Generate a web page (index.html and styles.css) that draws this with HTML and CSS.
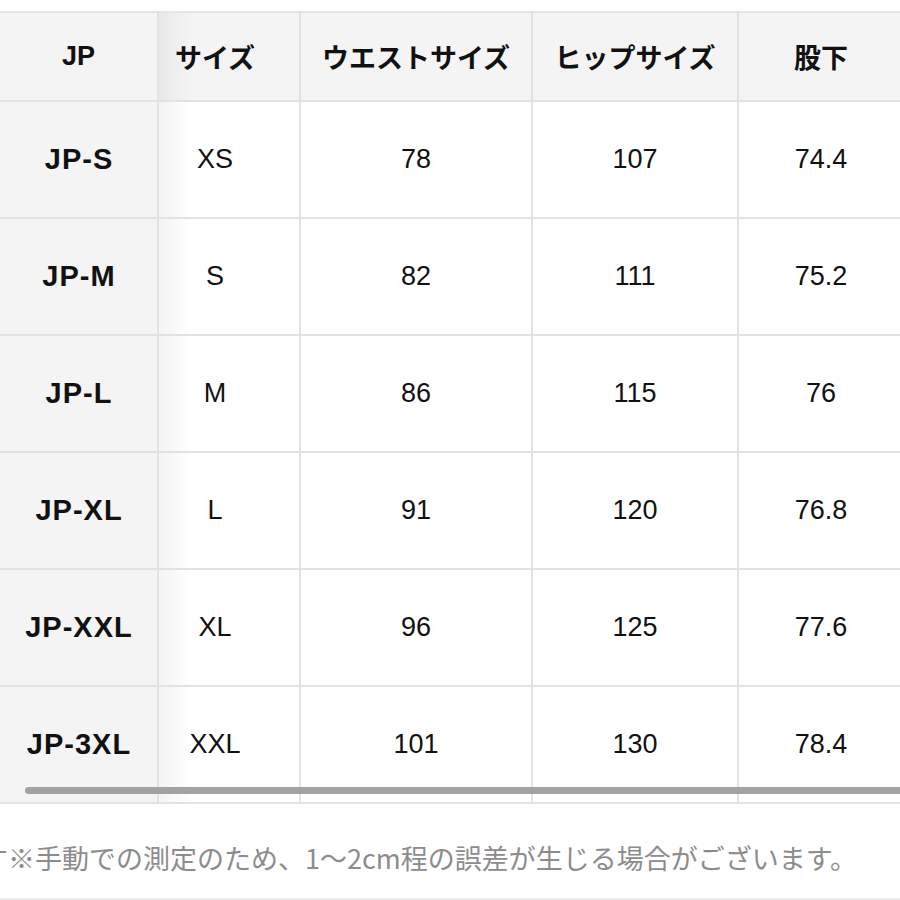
FILE: index.html
```html
<!DOCTYPE html>
<html lang="ja">
<head>
<meta charset="utf-8">
<title>サイズ表</title>
<link rel="stylesheet" href="styles.css">
</head>
<body>
<div class="page">
  <div class="table-wrap">
    <table class="size-table">
      <colgroup>
        <col class="c-jp">
        <col class="c-size">
        <col class="c-waist">
        <col class="c-hip">
        <col class="c-inseam">
      </colgroup>
      <thead>
        <tr>
          <th class="sticky">JP</th>
          <th class="size">サイズ</th>
          <th>ウエストサイズ</th>
          <th>ヒップサイズ</th>
          <th>股下</th>
        </tr>
      </thead>
      <tbody>
        <tr><th class="sticky">JP-S</th><td class="size">XS</td><td>78</td><td>107</td><td>74.4</td></tr>
        <tr><th class="sticky">JP-M</th><td class="size">S</td><td>82</td><td>111</td><td>75.2</td></tr>
        <tr><th class="sticky">JP-L</th><td class="size">M</td><td>86</td><td>115</td><td>76</td></tr>
        <tr><th class="sticky">JP-XL</th><td class="size">L</td><td>91</td><td>120</td><td>76.8</td></tr>
        <tr><th class="sticky">JP-XXL</th><td class="size">XL</td><td>96</td><td>125</td><td>77.6</td></tr>
        <tr><th class="sticky">JP-3XL</th><td class="size">XXL</td><td>101</td><td>130</td><td>78.4</td></tr>
      </tbody>
    </table>
    <div class="scroll-thumb"></div>
  </div>
  <p class="note"><span class="cut">す</span>※手動での測定のため、1〜2cm程の誤差が生じる場合がございます。</p>
</div>
</body>
</html>
```

FILE: styles.css
```css
html, body {
  margin: 0;
  padding: 0;
  background: #ffffff;
}

body {
  width: 900px;
  height: 900px;
  overflow: hidden;
  font-family: "Liberation Sans", "Noto Sans CJK JP", sans-serif;
  color: #111111;
}

.page {
  padding-top: 11px;
  height: 900px;
  border-bottom: 2px solid #eeeeee;
  box-sizing: border-box;
  position: relative;
}

.table-wrap {
  position: relative;
  width: 904px;
}

.size-table {
  border-collapse: collapse;
  table-layout: fixed;
  width: 904px;
  font-size: 27px;
}

.c-jp { width: 158px; }
.c-size { width: 142px; }
.c-waist { width: 232px; }
.c-hip { width: 206px; }
.c-inseam { width: 166px; }

.size-table th,
.size-table td {
  border: 2px solid #e2e2e2;
  text-align: center;
  vertical-align: middle;
  padding: 0;
  background: #ffffff;
}

.size-table tr:first-child th,
.size-table tr:first-child td {
  border-top-color: #e6e6e6;
}

.size-table th:first-child,
.size-table td:first-child {
  border-left: none;
}

.size-table thead th {
  height: 87px;
  background: #f4f4f4;
  font-weight: 700;
}

.size-table tbody th,
.size-table tbody td {
  height: 115px;
}

.size-table tbody td {
  font-weight: 400;
}

.size-table tbody th.sticky {
  background: #f4f4f4;
  font-weight: 700;
  font-size: 29px;
  letter-spacing: 1px;
  padding-left: 1px;
}

.size-table .size {
  padding-right: 28px;
  background-image: linear-gradient(to right, rgba(0, 0, 0, 0.045), rgba(0, 0, 0, 0) 34px);
}

.size-table thead th.size {
  background-color: #f4f4f4;
}

.scroll-thumb {
  position: absolute;
  left: 25px;
  right: -10px;
  top: 776px;
  height: 7px;
  border-radius: 4px;
  background: #a2a2a2;
}

.note {
  margin: 34px 0 0 0;
  font-family: "Noto Sans CJK JP", sans-serif;
  font-size: 27px;
  line-height: 40px;
  color: #8c8c8c;
  white-space: nowrap;
}

.note .cut {
  display: inline-block;
  margin-left: -19px;
}
```
